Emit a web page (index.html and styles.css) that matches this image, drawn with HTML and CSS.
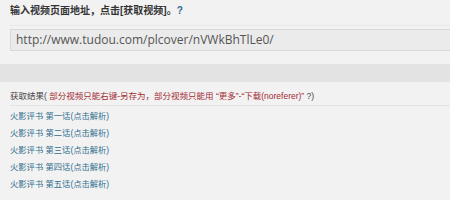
FILE: index.html
```html
<!DOCTYPE html>
<html>
<head>
<meta charset="utf-8">
<link rel="stylesheet" href="styles.css">
</head>
<body>
<div class="top">
  <div class="title">输入视频页面地址，点击[获取视频]。<span class="q">?</span></div>
  <div class="input-wrap"><div class="input">http://www.tudou.com/plcover/nVWkBhTlLe0/</div></div>
</div>
<div class="band"></div>
<div class="result">
  <div class="result-head">获取结果( <span class="red">部分视频只能右键-另存为，部分视频只能用 “更多”-“下载(noreferer)”</span> ?)</div>
  <ul class="list">
    <li><a>火影评书 第一话(点击解析)</a></li>
    <li><a>火影评书 第二话(点击解析)</a></li>
    <li><a>火影评书 第三话(点击解析)</a></li>
    <li><a>火影评书 第四话(点击解析)</a></li>
    <li><a>火影评书 第五话(点击解析)</a></li>
  </ul>
</div>
</body>
</html>
```
FILE: styles.css
```css
html, body { margin: 0; padding: 0; }
body {
  width: 450px; height: 200px; overflow: hidden;
  background: #f2f2f2;
  font-family: "Liberation Sans", "Noto Sans CJK SC", sans-serif;
  color: #333;
}
.top { padding: 3px 0 0 10px; height: 64px; box-sizing: border-box; }
.title { font-size: 10px; font-weight: bold; line-height: 16px; color: #333; }
.q { color: #2f6b94; }
.input-wrap { margin-top: 6px; border-top: 1px solid #e4eae8; padding-top: 3px; }
.input {
  height: 20px; border: 1px solid #d8d8d8; border-right: none;
  background: #ebebeb; font-family: "Open Sans", "Liberation Sans", sans-serif;
  font-size: 12px; line-height: 20px; color: #555; padding-left: 5px;
}
.band { height: 18px; background: #e3e3e3; }
.result { padding: 0 0 0 10px; }
.result-head {
  font-size: 8.5px; line-height: 18px; padding-top: 5px; color: #444;
  border-bottom: 1px solid #e2e5e5;
}
.red { color: #a32a33; }
.list { list-style: none; margin: 0; padding: 0; padding-top: 2px; }
.list li { font-size: 8.3px; line-height: 17px; }
.list a { color: #2f6e8e; }
```
